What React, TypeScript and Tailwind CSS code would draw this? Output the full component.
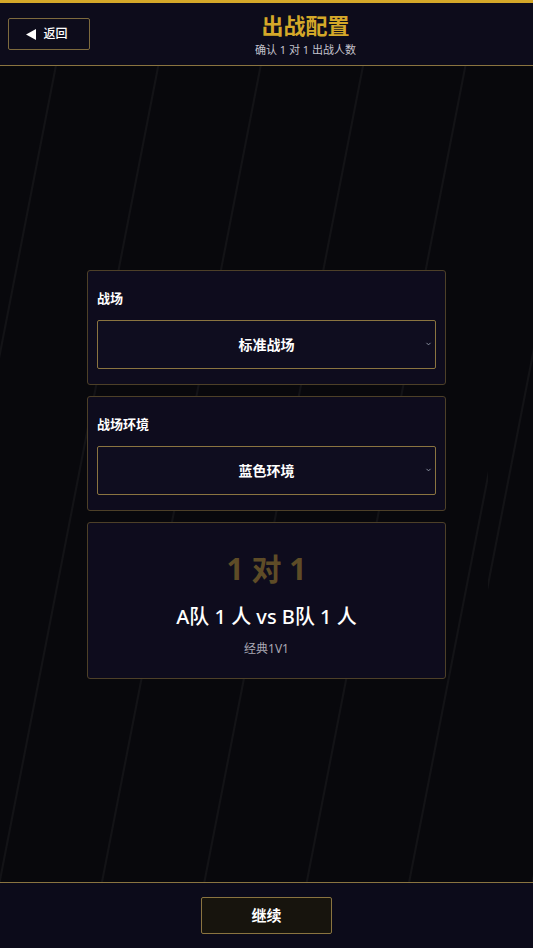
import { ChevronDown } from 'lucide-react'

function SelectBox({ label, value }: { label: string; value: string }) {
  return (
    <div className="rounded-[3px] border border-[#4d4028] bg-[#0e0c1d] px-[9px] pt-[17px] pb-[15px]">
      <div className="text-[13px] font-bold leading-5 text-white">{label}</div>
      <div className="relative mt-3 flex h-[49px] items-center justify-center rounded-[2px] border border-[#8a7440] bg-[#0f0d1f]">
        <span className="text-[14px] font-bold text-white">{value}</span>
        <ChevronDown className="absolute right-[3px] top-1/2 h-[7px] w-[7px] -translate-y-1/2 text-gray-400" strokeWidth={3} />
      </div>
    </div>
  )
}

export default function App() {
  return (
    <div
      className="flex h-[948px] flex-col bg-[#08080c] text-white"
      style={{ fontFamily: '"Noto Sans", "Noto Sans CJK SC", sans-serif' }}
    >
      {/* Header */}
      <header className="flex h-[66px] shrink-0 items-center border-t-[3px] border-b border-t-[#d4a829] border-b-[#8a7440] bg-[#0d0c1b] px-2">
        <button className="flex h-8 w-[82px] items-center justify-center gap-[7px] rounded-[2px] border border-[#7d6a3e] bg-[#0d0c1b] text-[12px] font-medium text-white">
          <svg width="10" height="11" viewBox="0 0 10 11" className="-ml-1">
            <path d="M10 0 L0 5.5 L10 11 Z" fill="white" />
          </svg>
          返回
        </button>
        <div className="flex flex-1 flex-col items-center pr-1">
          <div className="text-[22px] font-bold leading-7 text-[#d4a829]">出战配置</div>
          <div className="mt-[3px] text-[11px] leading-4 text-[#c4c3cc]">确认 1 对 1 出战人数</div>
        </div>
      </header>

      {/* Main */}
      <main className="flex flex-1 flex-col items-center justify-center bg-[repeating-linear-gradient(101deg,transparent_0px,transparent_97.5px,rgba(255,255,255,0.045)_98.5px,rgba(255,255,255,0.045)_99.5px,transparent_100.5px)] bg-[position:-45px_0]">
        <div className="flex w-[359px] flex-col gap-[11px]">
          <SelectBox label="战场" value="标准战场" />
          <SelectBox label="战场环境" value="蓝色环境" />
          <div className="flex h-[157px] flex-col items-center rounded-[3px] border border-[#4d4028] bg-[#0e0c1d] pt-[28px]">
            <div className="text-[30px] font-bold leading-9 text-[#5e4c27]">1 对 1</div>
            <div className="mt-[16px] text-[20px] font-medium leading-7 text-white">A队 1 人 vs B队 1 人</div>
            <div className="mt-[10px] text-[12px] leading-4 text-[#a9a8b3]">经典1V1</div>
          </div>
        </div>
      </main>

      {/* Footer */}
      <footer className="flex h-[66px] shrink-0 items-center justify-center border-t border-[#8a7440] bg-[#0c0b1a]">
        <button className="h-[37px] w-[131px] rounded-[2px] border border-[#8a7440] bg-[#17140d] text-[15px] font-bold text-white">
          继续
        </button>
      </footer>
    </div>
  )
}
